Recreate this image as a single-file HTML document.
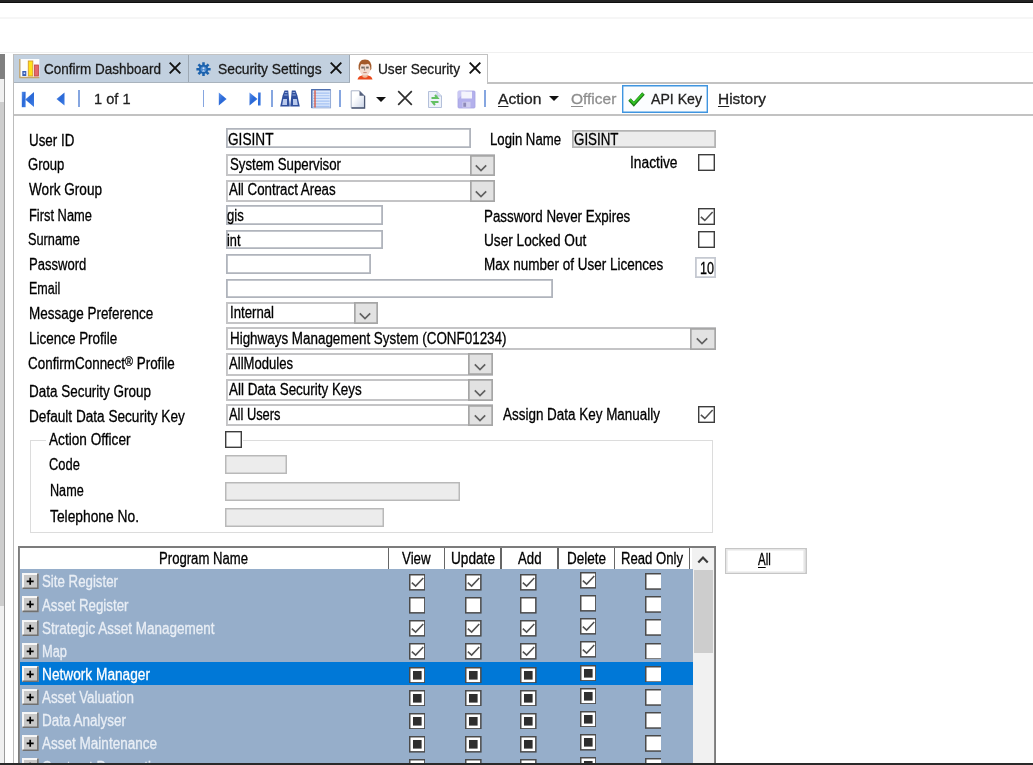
<!DOCTYPE html>
<html><head><meta charset="utf-8"><title>User Security</title>
<style>
html,body{margin:0;padding:0;background:#fff;}
body{width:1033px;height:765px;overflow:hidden;position:relative;font-family:"Liberation Sans",sans-serif;}
#wrap{position:absolute;left:-16px;top:-16px;width:1065px;height:797px;background:#fff;filter:blur(0.45px);}
#app{position:absolute;left:16px;top:16px;width:1033px;height:765px;}
.t{position:absolute;white-space:nowrap;line-height:1;transform-origin:0 0;-webkit-text-stroke:0.3px currentColor;}
.r{position:absolute;box-sizing:border-box;display:block;}
u{text-decoration-thickness:1.1px;text-underline-offset:1.6px;}
</style></head><body>
<div id="wrap"><div id="app">
<div class="r" style="left:-12.00px;top:-12.00px;width:1057.00px;height:15.00px;background:#0e0e0e;"></div>
<div class="r" style="left:-12.00px;top:-12.00px;width:1057.00px;height:13.70px;background:#232323;"></div>
<div class="r" style="left:-12.00px;top:16.80px;width:1057.00px;height:2.00px;background:#f6f6f6;"></div>
<div class="r" style="left:-12.00px;top:51.50px;width:1057.00px;height:1.00px;background:#f0f0f0;"></div>
<div class="r" style="left:-12.00px;top:53.50px;width:17.00px;height:25.80px;background:#808080;"></div>
<div class="r" style="left:-12.00px;top:79.30px;width:17.00px;height:697.70px;background:#f0f0f0;"></div>
<div class="r" style="left:-12.00px;top:101.80px;width:17.00px;height:504.20px;background:#cdcdcd;"></div>
<div class="r" style="left:4.00px;top:79.00px;width:1.40px;height:698.00px;background:#9c9c9c;"></div>
<div class="r" style="left:13.20px;top:54.00px;width:1.30px;height:723.00px;background:#bcbcbc;"></div>
<div class="r" style="left:14.00px;top:54.50px;width:335.50px;height:28.40px;background:#c2d0df;"></div>
<div class="r" style="left:13.50px;top:53.80px;width:474.50px;height:1.40px;background:#c2c2c2;"></div>
<div class="r" style="left:188.00px;top:55.00px;width:1.00px;height:28.00px;background:#9da8b4;"></div>
<div class="r" style="left:349.50px;top:55.00px;width:137.50px;height:28.50px;background:#fff;"></div>
<div class="r" style="left:348.70px;top:55.00px;width:1.10px;height:28.00px;background:#9da8b4;"></div>
<div class="r" style="left:487.00px;top:54.50px;width:1.00px;height:28.50px;background:#c0c0c0;"></div>
<div class="r" style="left:14.00px;top:82.10px;width:335.50px;height:1.00px;background:#a9b3bd;"></div>
<div class="r" style="left:487.00px;top:82.30px;width:558.00px;height:1.40px;background:#c2c2c2;"></div>
<div class="r" style="left:14.00px;top:114.30px;width:1031.00px;height:1.30px;background:#c2c2c2;"></div>
<span class="t" style="left:43.50px;top:60.58px;font-size:15.5px;color:#1a1a1a;transform:scaleX(0.8705);">Confirm Dashboard</span>
<span class="t" style="left:218.00px;top:60.58px;font-size:15.5px;color:#1a1a1a;transform:scaleX(0.8916);">Security Settings</span>
<span class="t" style="left:378.00px;top:60.58px;font-size:15.5px;color:#1a1a1a;transform:scaleX(0.8814);">User Security</span>
<svg class="r" style="left:166.50px;top:60.30px" width="16" height="16" viewBox="-8 -8 16 16"><path d="M-5.3 -5.3 L5.3 5.3 M5.3 -5.3 L-5.3 5.3" stroke="#111" stroke-width="1.9" fill="none"/></svg>
<svg class="r" style="left:328.10px;top:60.30px" width="16" height="16" viewBox="-8 -8 16 16"><path d="M-5.3 -5.3 L5.3 5.3 M5.3 -5.3 L-5.3 5.3" stroke="#111" stroke-width="1.9" fill="none"/></svg>
<svg class="r" style="left:467.10px;top:60.30px" width="16" height="16" viewBox="-8 -8 16 16"><path d="M-5.3 -5.3 L5.3 5.3 M5.3 -5.3 L-5.3 5.3" stroke="#111" stroke-width="1.9" fill="none"/></svg>
<svg class="r" style="left:18.400px;top:58.300px" width="22.600" height="22" viewBox="0 0 22 22"><rect x="2" y="1" width="19" height="18" fill="#fdfdfd"/><path d="M1.5 1 V19.5 H21" stroke="#c4a56a" stroke-width="1.3" fill="none"/><rect x="4" y="13" width="4" height="5" fill="#3a5fb5"/><rect x="5.3" y="14.5" width="1.6" height="1.6" fill="#cfe0ff"/><rect x="10" y="3" width="4.5" height="15" fill="#ffe21a" stroke="#d49a2a" stroke-width="0.9"/><rect x="16.2" y="7" width="4" height="11" fill="#e5686b" stroke="#bf4444" stroke-width="0.8"/></svg>
<svg class="r" style="left:196.300px;top:61.800px" width="15" height="14.500" viewBox="-8 -8 16 16" preserveAspectRatio="none"><g stroke="#1c62ad" stroke-width="2.700"><path d="M0 -7.600V7.600M-7.600 0H7.600M-5.400 -5.400L5.400 5.400M5.400 -5.400L-5.400 5.400"/></g><circle r="5" fill="#1c62ad"/><circle r="3.100" fill="#4f8bd0"/><circle cy="-1" r="1.100" fill="#cfe0f5"/><path d="M-1.600 2.600 Q0 -0.400 1.600 2.600Z" fill="#cfe0f5"/></svg>
<svg class="r" style="left:357px;top:58.500px" width="16" height="21" viewBox="0 0 16 21"><path d="M0.500 20.500 Q1 16.200 8 16.200 Q15 16.200 15.500 20.500 Z" fill="#ea4a1c"/><path d="M5.500 15 H10.500 V18 Q8 19.500 5.500 18Z" fill="#f0b89a"/><ellipse cx="8" cy="9.500" rx="5.600" ry="7" fill="#f3ddd0"/><path d="M1.600 10 Q0.800 0.500 8 0.500 Q15.200 0.500 14.400 10 L13.300 11.500 Q13.500 5.500 11 4.800 Q8 6 4.500 5 Q2.800 6 2.800 11.500Z" fill="#a35a2a"/><rect x="4.300" y="7.600" width="2.600" height="1.900" fill="#6f665f"/><rect x="9.100" y="7.600" width="2.600" height="1.900" fill="#6f665f"/><path d="M7.600 7.500 V11.500" stroke="#8a7a70" stroke-width="0.900"/><path d="M6.300 13.600 H9.700" stroke="#c98672" stroke-width="1"/></svg>
<svg class="r" width="0" height="0" style="left:0;top:0"><defs><linearGradient id="bl" x1="0" y1="0" x2="1" y2="1"><stop offset="0" stop-color="#5b92ec"/><stop offset="0.5" stop-color="#2a68d6"/><stop offset="1" stop-color="#3f7fe6"/></linearGradient></defs></svg>
<svg class="r" style="left:21px;top:90.500px" width="14" height="17" viewBox="0 0 14 17"><rect x="0.800" y="0.800" width="3.800" height="15.400" fill="url(#bl)"/><path d="M13 1 L4.200 8.500 L13 16Z" fill="url(#bl)"/></svg>
<svg class="r" style="left:55px;top:91px" width="12" height="16" viewBox="0 0 12 16"><path d="M9.500 1.500 L1.500 8 L9.500 14.500Z" fill="url(#bl)"/></svg>
<div class="r" style="left:78.45px;top:90.30px;width:1.10px;height:16.50px;background:#86a6e0;"></div>
<span class="t" style="left:93.50px;top:91.08px;font-size:15.5px;color:#222;transform:scaleX(0.9412);">1 of 1</span>
<div class="r" style="left:202.95px;top:90.30px;width:1.10px;height:16.50px;background:#86a6e0;"></div>
<svg class="r" style="left:217px;top:91px" width="12" height="16" viewBox="0 0 12 16"><path d="M1.800 1.500 L9.600 8 L1.800 14.500Z" fill="url(#bl)"/></svg>
<svg class="r" style="left:248px;top:91px" width="14" height="16" viewBox="0 0 14 16"><path d="M1.500 1.500 L9.500 8 L1.500 14.500Z" fill="url(#bl)"/><rect x="10" y="1.500" width="2.600" height="13" fill="url(#bl)"/></svg>
<div class="r" style="left:271.45px;top:90.30px;width:1.10px;height:16.50px;background:#86a6e0;"></div>
<svg class="r" style="left:279px;top:89px" width="22" height="20" viewBox="0 0 22 20"><g fill="#2f4f9e"><path d="M5.500 1.500 H9.200 L10.800 17.500 H1.200 L3.600 6.500Z"/><path d="M12.800 1.500 H16.500 L18.400 6.500 L20.800 17.500 H11.200Z"/></g><path d="M4.200 10 H8 V16 H3.200Z M14 10 H17.800 L18.800 16 H14Z" fill="#b9c9ec"/><path d="M5.800 3.500 H8.400 M13.600 3.500 H16.200 M5.200 6 H8.600 M13.400 6 H16.800" stroke="#9fb4e2" stroke-width="0.900"/></svg>
<svg class="r" style="left:311.300px;top:89px" width="20.500" height="19.800" viewBox="0 0 22 22" preserveAspectRatio="none"><rect x="1" y="1" width="20" height="20" fill="#dbe8fc" stroke="#8ea6d4" stroke-width="1"/><path d="M0.800 21 V0.800 H21" fill="none" stroke="#4f6fae" stroke-width="1.400"/><path d="M2 4.500H20M2 7.500H20M2 10.500H20M2 13.500H20M2 16.500H20M2 19.300H20" stroke="#a6c2f2" stroke-width="1.300"/><path d="M4.300 1.500V20.500" stroke="#e0482a" stroke-width="1.300"/></svg>
<div class="r" style="left:339.45px;top:90.30px;width:1.10px;height:16.50px;background:#86a6e0;"></div>
<svg class="r" style="left:350px;top:89.500px" width="16" height="19" viewBox="0 0 16 19"><defs><linearGradient id="pg" x1="0" y1="0" x2="1" y2="1"><stop offset="0.350" stop-color="#ffffff"/><stop offset="1" stop-color="#c9d3e6"/></linearGradient></defs><path d="M1.200 0.800 H9.500 L14.500 5.800 V17.800 H1.200Z" fill="url(#pg)" stroke="#a3adc2" stroke-width="0.900"/><path d="M9.500 0.800 L14.500 5.800 H9.500Z" fill="#56627e"/><path d="M14.600 5.800 V18 H1.500" stroke="#4a5673" stroke-width="1.300" fill="none"/></svg>
<svg class="r" style="left:375px;top:95.500px" width="12" height="7" viewBox="0 0 12 7"><path d="M1 1 H11 L6 6Z" fill="#111"/></svg>
<svg class="r" style="left:396.80px;top:90.00px" width="16" height="16" viewBox="-8 -8 16 16"><path d="M-6.8 -6.8 L6.8 6.8 M6.8 -6.8 L-6.8 6.8" stroke="#2e2e2e" stroke-width="1.65" fill="none"/></svg>
<svg class="r" style="left:427px;top:90px" width="16" height="19" viewBox="0 0 16 19"><path d="M1.500 1.500 H10 L14.500 6 V17.500 H1.500Z" fill="#eef2fa" stroke="#b4c0da" stroke-width="1"/><path d="M10 1.500 V6 H14.500" fill="#dbe3f2" stroke="#b4c0da" stroke-width="0.800"/><path d="M4.500 8 h6 l-2.500 -3 M11.500 12 h-6 l2.500 3" stroke="#63c062" stroke-width="2" fill="none"/></svg>
<svg class="r" style="left:457px;top:90px" width="19" height="19" viewBox="0 0 19 19"><rect x="1" y="1" width="17" height="17" rx="1" fill="#b3b0ec" stroke="#a6a3e2" stroke-width="0.800"/><path d="M1 1 H9 L1 9Z" fill="#c9c7f3"/><rect x="4.300" y="1.500" width="10.700" height="7" fill="#f4f4fc"/><rect x="5.500" y="11.800" width="8" height="5.700" fill="#cfcdf0"/><rect x="6.300" y="12.600" width="2.800" height="4.200" fill="#8e8ab8"/></svg>
<div class="r" style="left:484.45px;top:90.30px;width:1.10px;height:16.50px;background:#86a6e0;"></div>
<span class="t" style="left:497.50px;top:91.08px;font-size:15.5px;color:#222;transform:scaleX(1.0094);"><u>A</u>ction</span>
<svg class="r" style="left:547.5px;top:95px" width="12" height="7" viewBox="0 0 12 7"><path d="M1 1 H11 L6 6Z" fill="#111"/></svg>
<span class="t" style="left:570.70px;top:91.08px;font-size:15.5px;color:#8e8e8e;transform:scaleX(0.9983);"><u>O</u>fficer</span>
<div class="r" style="left:622.00px;top:84.90px;width:86.30px;height:28.10px;background:#fbfdff;box-shadow:inset 0 0 0 1.400px #3f95e0;"></div>
<svg class="r" style="left:627px;top:90px" width="19" height="18" viewBox="0 0 19 18"><path d="M2.500 9.500 L6.800 14.200 L16.500 3.500" fill="none" stroke="#1e7a17" stroke-width="3.400"/><path d="M2.800 9.300 L6.800 13.400 L16 3.600" fill="none" stroke="#32c424" stroke-width="1.800"/></svg>
<span class="t" style="left:650.70px;top:91.08px;font-size:15.5px;color:#222;transform:scaleX(0.9107);">API Key</span>
<span class="t" style="left:717.50px;top:91.08px;font-size:15.5px;color:#222;transform:scaleX(0.9948);"><u>H</u>istory</span>
<div class="r" style="left:30.00px;top:440.20px;width:682.80px;height:92.60px;background:transparent;box-shadow:inset 0 0 0 1px #dcdcdc;"></div>
<div class="r" style="left:46.00px;top:436.00px;width:197.00px;height:10.00px;background:#fff;"></div>
<span class="t" style="left:28.70px;top:132.69px;font-size:15.6px;color:#000;transform:scaleX(0.8570);">User ID</span>
<span class="t" style="left:28.20px;top:156.79px;font-size:15.6px;color:#000;transform:scaleX(0.8375);">Group</span>
<span class="t" style="left:28.70px;top:181.79px;font-size:15.6px;color:#000;transform:scaleX(0.8713);">Work Group</span>
<span class="t" style="left:28.70px;top:207.79px;font-size:15.6px;color:#000;transform:scaleX(0.8262);">First Name</span>
<span class="t" style="left:28.20px;top:232.29px;font-size:15.6px;color:#000;transform:scaleX(0.8186);">Surname</span>
<span class="t" style="left:28.70px;top:256.79px;font-size:15.6px;color:#000;transform:scaleX(0.8369);">Password</span>
<span class="t" style="left:28.70px;top:281.29px;font-size:15.6px;color:#000;transform:scaleX(0.8026);">Email</span>
<span class="t" style="left:28.70px;top:305.59px;font-size:15.6px;color:#000;transform:scaleX(0.8639);">Message Preference</span>
<span class="t" style="left:28.70px;top:331.29px;font-size:15.6px;color:#000;transform:scaleX(0.8633);">Licence Profile</span>
<span class="t" style="left:28.20px;top:355.79px;font-size:15.6px;color:#000;transform:scaleX(0.8613);">ConfirmConnect<span style="font-size:12.500px;position:relative;top:-2.500px">®</span> Profile</span>
<span class="t" style="left:28.70px;top:384.29px;font-size:15.6px;color:#000;transform:scaleX(0.8635);">Data Security Group</span>
<span class="t" style="left:28.70px;top:408.59px;font-size:15.6px;color:#000;transform:scaleX(0.8726);">Default Data Security Key</span>
<span class="t" style="left:49.20px;top:431.79px;font-size:15.6px;color:#000;transform:scaleX(0.8734);">Action Officer</span>
<span class="t" style="left:49.20px;top:457.29px;font-size:15.6px;color:#000;transform:scaleX(0.8262);">Code</span>
<span class="t" style="left:50.00px;top:482.79px;font-size:15.6px;color:#000;transform:scaleX(0.8099);">Name</span>
<span class="t" style="left:50.00px;top:508.79px;font-size:15.6px;color:#000;transform:scaleX(0.8849);">Telephone No.</span>
<div class="r" style="left:225.70px;top:128.30px;width:245.60px;height:20.20px;background:#fff;box-shadow:inset 0 0 0 1.8px #b0b4bc;"></div>
<span class="t" style="left:227.50px;top:131.89px;font-size:15.6px;color:#000;transform:scaleX(0.8753);">GISINT</span>
<span class="t" style="left:490.00px;top:131.99px;font-size:15.6px;color:#000;transform:scaleX(0.8443);">Login Name</span>
<div class="r" style="left:571.70px;top:129.80px;width:144.60px;height:18.00px;background:#ececec;box-shadow:inset 0 0 0 1.8px #b4b4b4;"></div>
<span class="t" style="left:573.50px;top:131.89px;font-size:15.6px;color:#000;transform:scaleX(0.8560);">GISINT</span>
<div class="r" style="left:225.70px;top:154.30px;width:269.10px;height:22.20px;background:#fff;box-shadow:inset 0 0 0 1.9px #c4c4c6;"></div>
<div class="r" style="left:469.50px;top:154.50px;width:25.30px;height:21.90px;background:#e2e2e2;box-shadow:inset 0 0 0 1.700px #a6a6a6;"></div>
<svg class="r" style="left:474.90px;top:164.10px" width="12" height="8" viewBox="0 0 12 8"><path d="M0.800 1.300 L6 6.500 L11.200 1.300" fill="none" stroke="#606060" stroke-width="1.700"/></svg>
<span class="t" style="left:229.50px;top:157.29px;font-size:15.6px;color:#000;transform:scaleX(0.8482);">System Supervisor</span>
<span class="t" style="left:630.00px;top:154.99px;font-size:15.6px;color:#000;transform:scaleX(0.8837);">Inactive</span>
<svg class="r" style="left:697.50px;top:154.20px" width="17" height="17" viewBox="0 0 17 17"><rect x="0.7" y="0.7" width="15.6" height="15.6" fill="#fff" stroke="#3d3d3d" stroke-width="1.4"/></svg>
<div class="r" style="left:225.70px;top:180.00px;width:269.10px;height:22.20px;background:#fff;box-shadow:inset 0 0 0 1.9px #c4c4c6;"></div>
<div class="r" style="left:469.50px;top:180.20px;width:25.30px;height:21.90px;background:#e2e2e2;box-shadow:inset 0 0 0 1.700px #a6a6a6;"></div>
<svg class="r" style="left:474.90px;top:189.80px" width="12" height="8" viewBox="0 0 12 8"><path d="M0.800 1.300 L6 6.500 L11.200 1.300" fill="none" stroke="#606060" stroke-width="1.700"/></svg>
<span class="t" style="left:229.00px;top:182.29px;font-size:15.6px;color:#000;transform:scaleX(0.8549);">All Contract Areas</span>
<div class="r" style="left:225.70px;top:205.30px;width:157.40px;height:19.70px;background:#fff;box-shadow:inset 0 0 0 1.8px #b0b4bc;"></div>
<span class="t" style="left:227.00px;top:208.29px;font-size:15.6px;color:#000;transform:scaleX(0.8376);">gis</span>
<span class="t" style="left:483.70px;top:209.39px;font-size:15.6px;color:#000;transform:scaleX(0.8569);">Password Never Expires</span>
<svg class="r" style="left:697.50px;top:208.00px" width="17" height="17" viewBox="0 0 17 17"><rect x="0.7" y="0.7" width="15.6" height="15.6" fill="#fff" stroke="#3d3d3d" stroke-width="1.4"/><path d="M2.89 8.84 L6.80 12.41 L14.62 4.08" fill="none" stroke="#505050" stroke-width="1.550"/></svg>
<div class="r" style="left:225.70px;top:229.80px;width:157.40px;height:19.50px;background:#fff;box-shadow:inset 0 0 0 1.8px #b0b4bc;"></div>
<span class="t" style="left:227.00px;top:232.79px;font-size:15.6px;color:#000;transform:scaleX(0.8190);">int</span>
<span class="t" style="left:483.70px;top:232.59px;font-size:15.6px;color:#000;transform:scaleX(0.8742);">User Locked Out</span>
<svg class="r" style="left:697.50px;top:231.00px" width="17" height="17" viewBox="0 0 17 17"><rect x="0.7" y="0.7" width="15.6" height="15.6" fill="#fff" stroke="#3d3d3d" stroke-width="1.4"/></svg>
<div class="r" style="left:225.70px;top:254.30px;width:144.90px;height:19.50px;background:#fff;box-shadow:inset 0 0 0 1.8px #b0b4bc;"></div>
<span class="t" style="left:483.70px;top:257.39px;font-size:15.6px;color:#000;transform:scaleX(0.8656);">Max number of User Licences</span>
<div class="r" style="left:694.70px;top:257.30px;width:21.20px;height:20.50px;background:#fff;box-shadow:inset 0 0 0 1.8px #c5c9d1;"></div>
<span class="t" style="left:700.00px;top:260.79px;font-size:15.6px;color:#000;transform:scaleX(0.8065);">10</span>
<div class="r" style="left:225.70px;top:278.80px;width:327.40px;height:19.50px;background:#fff;box-shadow:inset 0 0 0 1.8px #b0b4bc;"></div>
<div class="r" style="left:225.70px;top:301.80px;width:152.40px;height:22.50px;background:#fff;box-shadow:inset 0 0 0 1.9px #c4c4c6;"></div>
<div class="r" style="left:354.30px;top:302.00px;width:23.80px;height:22.20px;background:#e2e2e2;box-shadow:inset 0 0 0 1.700px #a6a6a6;"></div>
<svg class="r" style="left:358.95px;top:311.75px" width="12" height="8" viewBox="0 0 12 8"><path d="M0.800 1.300 L6 6.500 L11.200 1.300" fill="none" stroke="#606060" stroke-width="1.700"/></svg>
<span class="t" style="left:230.00px;top:304.89px;font-size:15.6px;color:#000;transform:scaleX(0.8459);">Internal</span>
<div class="r" style="left:225.70px;top:327.30px;width:490.00px;height:22.50px;background:#fff;box-shadow:inset 0 0 0 1.9px #c4c4c6;"></div>
<div class="r" style="left:689.90px;top:327.50px;width:25.80px;height:22.20px;background:#e2e2e2;box-shadow:inset 0 0 0 1.700px #a6a6a6;"></div>
<svg class="r" style="left:695.55px;top:337.25px" width="12" height="8" viewBox="0 0 12 8"><path d="M0.800 1.300 L6 6.500 L11.200 1.300" fill="none" stroke="#606060" stroke-width="1.700"/></svg>
<span class="t" style="left:229.50px;top:331.09px;font-size:15.6px;color:#000;transform:scaleX(0.8599);">Highways Management System (CONF01234)</span>
<div class="r" style="left:225.70px;top:353.00px;width:267.80px;height:22.50px;background:#fff;box-shadow:inset 0 0 0 1.9px #c4c4c6;"></div>
<div class="r" style="left:468.20px;top:353.20px;width:25.30px;height:22.20px;background:#e2e2e2;box-shadow:inset 0 0 0 1.700px #a6a6a6;"></div>
<svg class="r" style="left:473.60px;top:362.95px" width="12" height="8" viewBox="0 0 12 8"><path d="M0.800 1.300 L6 6.500 L11.200 1.300" fill="none" stroke="#606060" stroke-width="1.700"/></svg>
<span class="t" style="left:229.00px;top:356.29px;font-size:15.6px;color:#000;transform:scaleX(0.8390);">AllModules</span>
<div class="r" style="left:225.70px;top:378.80px;width:267.80px;height:22.30px;background:#fff;box-shadow:inset 0 0 0 1.9px #c4c4c6;"></div>
<div class="r" style="left:468.20px;top:379.00px;width:25.30px;height:22.00px;background:#e2e2e2;box-shadow:inset 0 0 0 1.700px #a6a6a6;"></div>
<svg class="r" style="left:473.60px;top:388.65px" width="12" height="8" viewBox="0 0 12 8"><path d="M0.800 1.300 L6 6.500 L11.200 1.300" fill="none" stroke="#606060" stroke-width="1.700"/></svg>
<span class="t" style="left:229.00px;top:381.89px;font-size:15.6px;color:#000;transform:scaleX(0.8602);">All Data Security Keys</span>
<div class="r" style="left:225.70px;top:404.30px;width:267.80px;height:22.20px;background:#fff;box-shadow:inset 0 0 0 1.9px #c4c4c6;"></div>
<div class="r" style="left:468.20px;top:404.50px;width:25.30px;height:21.90px;background:#e2e2e2;box-shadow:inset 0 0 0 1.700px #a6a6a6;"></div>
<svg class="r" style="left:473.60px;top:414.10px" width="12" height="8" viewBox="0 0 12 8"><path d="M0.800 1.300 L6 6.500 L11.200 1.300" fill="none" stroke="#606060" stroke-width="1.700"/></svg>
<span class="t" style="left:229.00px;top:407.29px;font-size:15.6px;color:#000;transform:scaleX(0.8254);">All Users</span>
<span class="t" style="left:502.50px;top:406.79px;font-size:15.6px;color:#000;transform:scaleX(0.8625);">Assign Data Key Manually</span>
<svg class="r" style="left:697.50px;top:406.00px" width="17" height="17" viewBox="0 0 17 17"><rect x="0.7" y="0.7" width="15.6" height="15.6" fill="#fff" stroke="#3d3d3d" stroke-width="1.4"/><path d="M2.89 8.84 L6.80 12.41 L14.62 4.08" fill="none" stroke="#505050" stroke-width="1.550"/></svg>
<svg class="r" style="left:225.30px;top:430.80px" width="17" height="17" viewBox="0 0 17 17"><rect x="0.7" y="0.7" width="15.6" height="15.6" fill="#fff" stroke="#3d3d3d" stroke-width="1.4"/></svg>
<div class="r" style="left:224.70px;top:454.90px;width:62.60px;height:19.60px;background:#ececec;box-shadow:inset 0 0 0 1.5px #b9b9b9;"></div>
<div class="r" style="left:224.70px;top:481.90px;width:235.60px;height:19.60px;background:#ececec;box-shadow:inset 0 0 0 1.5px #b9b9b9;"></div>
<div class="r" style="left:224.70px;top:507.90px;width:158.90px;height:19.60px;background:#ececec;box-shadow:inset 0 0 0 1.5px #b9b9b9;"></div>
<div class="r" style="left:18.00px;top:546.30px;width:698.00px;height:230.70px;background:#fff;box-shadow:inset 0 0 0 1.900px #7c7c7c;"></div>
<div class="r" style="left:20.10px;top:548.00px;width:672.40px;height:20.90px;background:#fff;"></div>
<div class="r" style="left:387.80px;top:547.50px;width:1.60px;height:21.20px;background:#666;"></div>
<div class="r" style="left:443.80px;top:547.50px;width:1.60px;height:21.20px;background:#666;"></div>
<div class="r" style="left:500.40px;top:547.50px;width:1.60px;height:21.20px;background:#666;"></div>
<div class="r" style="left:557.00px;top:547.50px;width:1.60px;height:21.20px;background:#666;"></div>
<div class="r" style="left:613.50px;top:547.50px;width:1.60px;height:21.20px;background:#666;"></div>
<div class="r" style="left:688.50px;top:547.50px;width:1.60px;height:21.20px;background:#666;"></div>
<span class="t" style="left:159.00px;top:550.99px;font-size:15.6px;color:#000;transform:scaleX(0.8417);">Program Name</span>
<span class="t" style="left:402.40px;top:550.99px;font-size:15.6px;color:#000;transform:scaleX(0.8529);">View</span>
<span class="t" style="left:451.00px;top:550.99px;font-size:15.6px;color:#000;transform:scaleX(0.8748);">Update</span>
<span class="t" style="left:518.00px;top:550.99px;font-size:15.6px;color:#000;transform:scaleX(0.8468);">Add</span>
<span class="t" style="left:566.50px;top:550.99px;font-size:15.6px;color:#000;transform:scaleX(0.8674);">Delete</span>
<span class="t" style="left:621.00px;top:550.99px;font-size:15.6px;color:#000;transform:scaleX(0.8414);">Read Only</span>
<div class="r" style="left:692.30px;top:548.00px;width:22.00px;height:229.00px;background:#f1f1f1;"></div>
<div class="r" style="left:694.20px;top:569.50px;width:18.60px;height:83.00px;background:#cdcdcd;"></div>
<svg class="r" style="left:697px;top:553.500px" width="12" height="11" viewBox="0 0 12 11"><path d="M1.300 8.500 L6 3.500 L10.700 8.500" fill="none" stroke="#3c3c3c" stroke-width="2.200"/></svg>
<div class="r" style="left:20.00px;top:568.90px;width:672.50px;height:208.10px;background:#96aeca;"></div>
<svg class="r" style="left:22px;top:573.30px" width="16.700" height="16.200" viewBox="0 0 16.700 16.200"><rect x="0" y="0" width="16.700" height="16.200" fill="#c8c8c8"/><path d="M1 15.200V1H15.700" stroke="#f6f6f6" stroke-width="2" fill="none"/><path d="M15.900 0.500V15.400H0.500" stroke="#707070" stroke-width="1.600" fill="none"/><path d="M4.700 8.300H11.700M8.200 4.800V11.800" stroke="#000" stroke-width="1.700"/></svg>
<span class="t" style="left:42.00px;top:574.39px;font-size:15.6px;color:#e9eef5;transform:scaleX(0.8512);">Site Register</span>
<svg class="r" style="left:408.50px;top:574.00px" width="16.6" height="16.6" viewBox="0 0 16.6 16.6"><rect x="0.75" y="0.75" width="15.100000000000001" height="15.100000000000001" fill="#fff" stroke="#4a4a4a" stroke-width="1.5"/><path d="M2.82 8.63 L6.64 12.12 L14.28 3.98" fill="none" stroke="#505050" stroke-width="1.550"/></svg>
<svg class="r" style="left:465.00px;top:574.00px" width="16.6" height="16.6" viewBox="0 0 16.6 16.6"><rect x="0.75" y="0.75" width="15.100000000000001" height="15.100000000000001" fill="#fff" stroke="#4a4a4a" stroke-width="1.5"/><path d="M2.82 8.63 L6.64 12.12 L14.28 3.98" fill="none" stroke="#505050" stroke-width="1.550"/></svg>
<svg class="r" style="left:520.00px;top:574.00px" width="16.6" height="16.6" viewBox="0 0 16.6 16.6"><rect x="0.75" y="0.75" width="15.100000000000001" height="15.100000000000001" fill="#fff" stroke="#4a4a4a" stroke-width="1.5"/><path d="M2.82 8.63 L6.64 12.12 L14.28 3.98" fill="none" stroke="#505050" stroke-width="1.550"/></svg>
<svg class="r" style="left:579.70px;top:572.00px" width="16.6" height="16.6" viewBox="0 0 16.6 16.6"><rect x="0.75" y="0.75" width="15.100000000000001" height="15.100000000000001" fill="#fff" stroke="#4a4a4a" stroke-width="1.5"/><path d="M2.82 8.63 L6.64 12.12 L14.28 3.98" fill="none" stroke="#505050" stroke-width="1.550"/></svg>
<svg class="r" style="left:645.00px;top:573.10px" width="15.50" height="16.8" viewBox="0 0 15.50 16.8"><rect x="0.75" y="0.75" width="20.8" height="15.3" fill="#fff" stroke="#4a4a4a" stroke-width="1.5"/></svg>
<svg class="r" style="left:22px;top:596.44px" width="16.700" height="16.200" viewBox="0 0 16.700 16.200"><rect x="0" y="0" width="16.700" height="16.200" fill="#c8c8c8"/><path d="M1 15.200V1H15.700" stroke="#f6f6f6" stroke-width="2" fill="none"/><path d="M15.900 0.500V15.400H0.500" stroke="#707070" stroke-width="1.600" fill="none"/><path d="M4.700 8.300H11.700M8.200 4.800V11.800" stroke="#000" stroke-width="1.700"/></svg>
<span class="t" style="left:42.00px;top:597.53px;font-size:15.6px;color:#e9eef5;transform:scaleX(0.8530);">Asset Register</span>
<svg class="r" style="left:408.50px;top:597.14px" width="16.6" height="16.6" viewBox="0 0 16.6 16.6"><rect x="0.75" y="0.75" width="15.100000000000001" height="15.100000000000001" fill="#fff" stroke="#4a4a4a" stroke-width="1.5"/></svg>
<svg class="r" style="left:465.00px;top:597.14px" width="16.6" height="16.6" viewBox="0 0 16.6 16.6"><rect x="0.75" y="0.75" width="15.100000000000001" height="15.100000000000001" fill="#fff" stroke="#4a4a4a" stroke-width="1.5"/></svg>
<svg class="r" style="left:520.00px;top:597.14px" width="16.6" height="16.6" viewBox="0 0 16.6 16.6"><rect x="0.75" y="0.75" width="15.100000000000001" height="15.100000000000001" fill="#fff" stroke="#4a4a4a" stroke-width="1.5"/></svg>
<svg class="r" style="left:579.70px;top:595.14px" width="16.6" height="16.6" viewBox="0 0 16.6 16.6"><rect x="0.75" y="0.75" width="15.100000000000001" height="15.100000000000001" fill="#fff" stroke="#4a4a4a" stroke-width="1.5"/></svg>
<svg class="r" style="left:645.00px;top:596.24px" width="15.50" height="16.8" viewBox="0 0 15.50 16.8"><rect x="0.75" y="0.75" width="20.8" height="15.3" fill="#fff" stroke="#4a4a4a" stroke-width="1.5"/></svg>
<svg class="r" style="left:22px;top:619.58px" width="16.700" height="16.200" viewBox="0 0 16.700 16.200"><rect x="0" y="0" width="16.700" height="16.200" fill="#c8c8c8"/><path d="M1 15.200V1H15.700" stroke="#f6f6f6" stroke-width="2" fill="none"/><path d="M15.900 0.500V15.400H0.500" stroke="#707070" stroke-width="1.600" fill="none"/><path d="M4.700 8.300H11.700M8.200 4.800V11.800" stroke="#000" stroke-width="1.700"/></svg>
<span class="t" style="left:42.00px;top:620.67px;font-size:15.6px;color:#e9eef5;transform:scaleX(0.8652);">Strategic Asset Management</span>
<svg class="r" style="left:408.50px;top:620.28px" width="16.6" height="16.6" viewBox="0 0 16.6 16.6"><rect x="0.75" y="0.75" width="15.100000000000001" height="15.100000000000001" fill="#fff" stroke="#4a4a4a" stroke-width="1.5"/><path d="M2.82 8.63 L6.64 12.12 L14.28 3.98" fill="none" stroke="#505050" stroke-width="1.550"/></svg>
<svg class="r" style="left:465.00px;top:620.28px" width="16.6" height="16.6" viewBox="0 0 16.6 16.6"><rect x="0.75" y="0.75" width="15.100000000000001" height="15.100000000000001" fill="#fff" stroke="#4a4a4a" stroke-width="1.5"/><path d="M2.82 8.63 L6.64 12.12 L14.28 3.98" fill="none" stroke="#505050" stroke-width="1.550"/></svg>
<svg class="r" style="left:520.00px;top:620.28px" width="16.6" height="16.6" viewBox="0 0 16.6 16.6"><rect x="0.75" y="0.75" width="15.100000000000001" height="15.100000000000001" fill="#fff" stroke="#4a4a4a" stroke-width="1.5"/><path d="M2.82 8.63 L6.64 12.12 L14.28 3.98" fill="none" stroke="#505050" stroke-width="1.550"/></svg>
<svg class="r" style="left:579.70px;top:618.28px" width="16.6" height="16.6" viewBox="0 0 16.6 16.6"><rect x="0.75" y="0.75" width="15.100000000000001" height="15.100000000000001" fill="#fff" stroke="#4a4a4a" stroke-width="1.5"/><path d="M2.82 8.63 L6.64 12.12 L14.28 3.98" fill="none" stroke="#505050" stroke-width="1.550"/></svg>
<svg class="r" style="left:645.00px;top:619.38px" width="15.50" height="16.8" viewBox="0 0 15.50 16.8"><rect x="0.75" y="0.75" width="20.8" height="15.3" fill="#fff" stroke="#4a4a4a" stroke-width="1.5"/></svg>
<svg class="r" style="left:22px;top:642.72px" width="16.700" height="16.200" viewBox="0 0 16.700 16.200"><rect x="0" y="0" width="16.700" height="16.200" fill="#c8c8c8"/><path d="M1 15.200V1H15.700" stroke="#f6f6f6" stroke-width="2" fill="none"/><path d="M15.900 0.500V15.400H0.500" stroke="#707070" stroke-width="1.600" fill="none"/><path d="M4.700 8.300H11.700M8.200 4.800V11.800" stroke="#000" stroke-width="1.700"/></svg>
<span class="t" style="left:42.00px;top:643.81px;font-size:15.6px;color:#e9eef5;transform:scaleX(0.8239);">Map</span>
<svg class="r" style="left:408.50px;top:643.42px" width="16.6" height="16.6" viewBox="0 0 16.6 16.6"><rect x="0.75" y="0.75" width="15.100000000000001" height="15.100000000000001" fill="#fff" stroke="#4a4a4a" stroke-width="1.5"/><path d="M2.82 8.63 L6.64 12.12 L14.28 3.98" fill="none" stroke="#505050" stroke-width="1.550"/></svg>
<svg class="r" style="left:465.00px;top:643.42px" width="16.6" height="16.6" viewBox="0 0 16.6 16.6"><rect x="0.75" y="0.75" width="15.100000000000001" height="15.100000000000001" fill="#fff" stroke="#4a4a4a" stroke-width="1.5"/><path d="M2.82 8.63 L6.64 12.12 L14.28 3.98" fill="none" stroke="#505050" stroke-width="1.550"/></svg>
<svg class="r" style="left:520.00px;top:643.42px" width="16.6" height="16.6" viewBox="0 0 16.6 16.6"><rect x="0.75" y="0.75" width="15.100000000000001" height="15.100000000000001" fill="#fff" stroke="#4a4a4a" stroke-width="1.5"/><path d="M2.82 8.63 L6.64 12.12 L14.28 3.98" fill="none" stroke="#505050" stroke-width="1.550"/></svg>
<svg class="r" style="left:579.70px;top:641.42px" width="16.6" height="16.6" viewBox="0 0 16.6 16.6"><rect x="0.75" y="0.75" width="15.100000000000001" height="15.100000000000001" fill="#fff" stroke="#4a4a4a" stroke-width="1.5"/><path d="M2.82 8.63 L6.64 12.12 L14.28 3.98" fill="none" stroke="#505050" stroke-width="1.550"/></svg>
<svg class="r" style="left:645.00px;top:642.52px" width="15.50" height="16.8" viewBox="0 0 15.50 16.8"><rect x="0.75" y="0.75" width="20.8" height="15.3" fill="#fff" stroke="#4a4a4a" stroke-width="1.5"/></svg>
<div class="r" style="left:20.00px;top:661.76px;width:672.50px;height:23.14px;background:#0078d7;"></div>
<svg class="r" style="left:22px;top:665.86px" width="16.700" height="16.200" viewBox="0 0 16.700 16.200"><rect x="0" y="0" width="16.700" height="16.200" fill="#c8c8c8"/><path d="M1 15.200V1H15.700" stroke="#f6f6f6" stroke-width="2" fill="none"/><path d="M15.900 0.500V15.400H0.500" stroke="#707070" stroke-width="1.600" fill="none"/><path d="M4.700 8.300H11.700M8.200 4.800V11.800" stroke="#000" stroke-width="1.700"/></svg>
<span class="t" style="left:42.00px;top:666.95px;font-size:15.6px;color:#fff;transform:scaleX(0.8775);">Network Manager</span>
<svg class="r" style="left:408.50px;top:666.56px" width="16.6" height="16.6" viewBox="0 0 16.6 16.6"><rect x="0.75" y="0.75" width="15.100000000000001" height="15.100000000000001" fill="#fff" stroke="#4a4a4a" stroke-width="1.5"/><rect x="3.98" y="3.98" width="8.63" height="8.63" fill="#2e2e2e"/></svg>
<svg class="r" style="left:465.00px;top:666.56px" width="16.6" height="16.6" viewBox="0 0 16.6 16.6"><rect x="0.75" y="0.75" width="15.100000000000001" height="15.100000000000001" fill="#fff" stroke="#4a4a4a" stroke-width="1.5"/><rect x="3.98" y="3.98" width="8.63" height="8.63" fill="#2e2e2e"/></svg>
<svg class="r" style="left:520.00px;top:666.56px" width="16.6" height="16.6" viewBox="0 0 16.6 16.6"><rect x="0.75" y="0.75" width="15.100000000000001" height="15.100000000000001" fill="#fff" stroke="#4a4a4a" stroke-width="1.5"/><rect x="3.98" y="3.98" width="8.63" height="8.63" fill="#2e2e2e"/></svg>
<svg class="r" style="left:579.70px;top:664.56px" width="16.6" height="16.6" viewBox="0 0 16.6 16.6"><rect x="0.75" y="0.75" width="15.100000000000001" height="15.100000000000001" fill="#fff" stroke="#4a4a4a" stroke-width="1.5"/><rect x="3.98" y="3.98" width="8.63" height="8.63" fill="#2e2e2e"/></svg>
<svg class="r" style="left:645.00px;top:665.66px" width="15.50" height="16.8" viewBox="0 0 15.50 16.8"><rect x="0.75" y="0.75" width="20.8" height="15.3" fill="#fff" stroke="#4a4a4a" stroke-width="1.5"/></svg>
<svg class="r" style="left:22px;top:689.00px" width="16.700" height="16.200" viewBox="0 0 16.700 16.200"><rect x="0" y="0" width="16.700" height="16.200" fill="#c8c8c8"/><path d="M1 15.200V1H15.700" stroke="#f6f6f6" stroke-width="2" fill="none"/><path d="M15.900 0.500V15.400H0.500" stroke="#707070" stroke-width="1.600" fill="none"/><path d="M4.700 8.300H11.700M8.200 4.800V11.800" stroke="#000" stroke-width="1.700"/></svg>
<span class="t" style="left:42.00px;top:690.09px;font-size:15.6px;color:#e9eef5;transform:scaleX(0.8582);">Asset Valuation</span>
<svg class="r" style="left:408.50px;top:689.70px" width="16.6" height="16.6" viewBox="0 0 16.6 16.6"><rect x="0.75" y="0.75" width="15.100000000000001" height="15.100000000000001" fill="#fff" stroke="#4a4a4a" stroke-width="1.5"/><rect x="3.98" y="3.98" width="8.63" height="8.63" fill="#2e2e2e"/></svg>
<svg class="r" style="left:465.00px;top:689.70px" width="16.6" height="16.6" viewBox="0 0 16.6 16.6"><rect x="0.75" y="0.75" width="15.100000000000001" height="15.100000000000001" fill="#fff" stroke="#4a4a4a" stroke-width="1.5"/><rect x="3.98" y="3.98" width="8.63" height="8.63" fill="#2e2e2e"/></svg>
<svg class="r" style="left:520.00px;top:689.70px" width="16.6" height="16.6" viewBox="0 0 16.6 16.6"><rect x="0.75" y="0.75" width="15.100000000000001" height="15.100000000000001" fill="#fff" stroke="#4a4a4a" stroke-width="1.5"/><rect x="3.98" y="3.98" width="8.63" height="8.63" fill="#2e2e2e"/></svg>
<svg class="r" style="left:579.70px;top:687.70px" width="16.6" height="16.6" viewBox="0 0 16.6 16.6"><rect x="0.75" y="0.75" width="15.100000000000001" height="15.100000000000001" fill="#fff" stroke="#4a4a4a" stroke-width="1.5"/><rect x="3.98" y="3.98" width="8.63" height="8.63" fill="#2e2e2e"/></svg>
<svg class="r" style="left:645.00px;top:688.80px" width="15.50" height="16.8" viewBox="0 0 15.50 16.8"><rect x="0.75" y="0.75" width="20.8" height="15.3" fill="#fff" stroke="#4a4a4a" stroke-width="1.5"/></svg>
<svg class="r" style="left:22px;top:712.14px" width="16.700" height="16.200" viewBox="0 0 16.700 16.200"><rect x="0" y="0" width="16.700" height="16.200" fill="#c8c8c8"/><path d="M1 15.200V1H15.700" stroke="#f6f6f6" stroke-width="2" fill="none"/><path d="M15.900 0.500V15.400H0.500" stroke="#707070" stroke-width="1.600" fill="none"/><path d="M4.700 8.300H11.700M8.200 4.800V11.800" stroke="#000" stroke-width="1.700"/></svg>
<span class="t" style="left:42.00px;top:713.23px;font-size:15.6px;color:#e9eef5;transform:scaleX(0.8651);">Data Analyser</span>
<svg class="r" style="left:408.50px;top:712.84px" width="16.6" height="16.6" viewBox="0 0 16.6 16.6"><rect x="0.75" y="0.75" width="15.100000000000001" height="15.100000000000001" fill="#fff" stroke="#4a4a4a" stroke-width="1.5"/><rect x="3.98" y="3.98" width="8.63" height="8.63" fill="#2e2e2e"/></svg>
<svg class="r" style="left:465.00px;top:712.84px" width="16.6" height="16.6" viewBox="0 0 16.6 16.6"><rect x="0.75" y="0.75" width="15.100000000000001" height="15.100000000000001" fill="#fff" stroke="#4a4a4a" stroke-width="1.5"/><rect x="3.98" y="3.98" width="8.63" height="8.63" fill="#2e2e2e"/></svg>
<svg class="r" style="left:520.00px;top:712.84px" width="16.6" height="16.6" viewBox="0 0 16.6 16.6"><rect x="0.75" y="0.75" width="15.100000000000001" height="15.100000000000001" fill="#fff" stroke="#4a4a4a" stroke-width="1.5"/><rect x="3.98" y="3.98" width="8.63" height="8.63" fill="#2e2e2e"/></svg>
<svg class="r" style="left:579.70px;top:710.84px" width="16.6" height="16.6" viewBox="0 0 16.6 16.6"><rect x="0.75" y="0.75" width="15.100000000000001" height="15.100000000000001" fill="#fff" stroke="#4a4a4a" stroke-width="1.5"/><rect x="3.98" y="3.98" width="8.63" height="8.63" fill="#2e2e2e"/></svg>
<svg class="r" style="left:645.00px;top:711.94px" width="15.50" height="16.8" viewBox="0 0 15.50 16.8"><rect x="0.75" y="0.75" width="20.8" height="15.3" fill="#fff" stroke="#4a4a4a" stroke-width="1.5"/></svg>
<svg class="r" style="left:22px;top:735.28px" width="16.700" height="16.200" viewBox="0 0 16.700 16.200"><rect x="0" y="0" width="16.700" height="16.200" fill="#c8c8c8"/><path d="M1 15.200V1H15.700" stroke="#f6f6f6" stroke-width="2" fill="none"/><path d="M15.900 0.500V15.400H0.500" stroke="#707070" stroke-width="1.600" fill="none"/><path d="M4.700 8.300H11.700M8.200 4.800V11.800" stroke="#000" stroke-width="1.700"/></svg>
<span class="t" style="left:42.00px;top:736.37px;font-size:15.6px;color:#e9eef5;transform:scaleX(0.8671);">Asset Maintenance</span>
<svg class="r" style="left:408.50px;top:735.98px" width="16.6" height="16.6" viewBox="0 0 16.6 16.6"><rect x="0.75" y="0.75" width="15.100000000000001" height="15.100000000000001" fill="#fff" stroke="#4a4a4a" stroke-width="1.5"/><rect x="3.98" y="3.98" width="8.63" height="8.63" fill="#2e2e2e"/></svg>
<svg class="r" style="left:465.00px;top:735.98px" width="16.6" height="16.6" viewBox="0 0 16.6 16.6"><rect x="0.75" y="0.75" width="15.100000000000001" height="15.100000000000001" fill="#fff" stroke="#4a4a4a" stroke-width="1.5"/><rect x="3.98" y="3.98" width="8.63" height="8.63" fill="#2e2e2e"/></svg>
<svg class="r" style="left:520.00px;top:735.98px" width="16.6" height="16.6" viewBox="0 0 16.6 16.6"><rect x="0.75" y="0.75" width="15.100000000000001" height="15.100000000000001" fill="#fff" stroke="#4a4a4a" stroke-width="1.5"/><rect x="3.98" y="3.98" width="8.63" height="8.63" fill="#2e2e2e"/></svg>
<svg class="r" style="left:579.70px;top:733.98px" width="16.6" height="16.6" viewBox="0 0 16.6 16.6"><rect x="0.75" y="0.75" width="15.100000000000001" height="15.100000000000001" fill="#fff" stroke="#4a4a4a" stroke-width="1.5"/><rect x="3.98" y="3.98" width="8.63" height="8.63" fill="#2e2e2e"/></svg>
<svg class="r" style="left:645.00px;top:735.08px" width="15.50" height="16.8" viewBox="0 0 15.50 16.8"><rect x="0.75" y="0.75" width="20.8" height="15.3" fill="#fff" stroke="#4a4a4a" stroke-width="1.5"/></svg>
<svg class="r" style="left:22px;top:758.42px" width="16.700" height="16.200" viewBox="0 0 16.700 16.200"><rect x="0" y="0" width="16.700" height="16.200" fill="#c8c8c8"/><path d="M1 15.200V1H15.700" stroke="#f6f6f6" stroke-width="2" fill="none"/><path d="M15.900 0.500V15.400H0.500" stroke="#707070" stroke-width="1.600" fill="none"/><path d="M4.700 8.300H11.700M8.200 4.800V11.800" stroke="#000" stroke-width="1.700"/></svg>
<span class="t" style="left:42.00px;top:759.51px;font-size:15.6px;color:#e9eef5;transform:scaleX(0.8618);">Contract Preparation</span>
<svg class="r" style="left:408.50px;top:759.12px" width="16.6" height="16.6" viewBox="0 0 16.6 16.6"><rect x="0.75" y="0.75" width="15.100000000000001" height="15.100000000000001" fill="#fff" stroke="#4a4a4a" stroke-width="1.5"/><rect x="3.98" y="3.98" width="8.63" height="8.63" fill="#2e2e2e"/></svg>
<svg class="r" style="left:465.00px;top:759.12px" width="16.6" height="16.6" viewBox="0 0 16.6 16.6"><rect x="0.75" y="0.75" width="15.100000000000001" height="15.100000000000001" fill="#fff" stroke="#4a4a4a" stroke-width="1.5"/><rect x="3.98" y="3.98" width="8.63" height="8.63" fill="#2e2e2e"/></svg>
<svg class="r" style="left:520.00px;top:759.12px" width="16.6" height="16.6" viewBox="0 0 16.6 16.6"><rect x="0.75" y="0.75" width="15.100000000000001" height="15.100000000000001" fill="#fff" stroke="#4a4a4a" stroke-width="1.5"/><rect x="3.98" y="3.98" width="8.63" height="8.63" fill="#2e2e2e"/></svg>
<svg class="r" style="left:579.70px;top:757.12px" width="16.6" height="16.6" viewBox="0 0 16.6 16.6"><rect x="0.75" y="0.75" width="15.100000000000001" height="15.100000000000001" fill="#fff" stroke="#4a4a4a" stroke-width="1.5"/><rect x="3.98" y="3.98" width="8.63" height="8.63" fill="#2e2e2e"/></svg>
<svg class="r" style="left:645.00px;top:758.22px" width="15.50" height="16.8" viewBox="0 0 15.50 16.8"><rect x="0.75" y="0.75" width="20.8" height="15.3" fill="#fff" stroke="#4a4a4a" stroke-width="1.5"/></svg>
<div class="r" style="left:724.90px;top:547.70px;width:82.10px;height:26.60px;background:#fff;box-shadow:inset 0 0 0 1.600px #c6c6c6;"></div>
<div class="r" style="left:726.40px;top:549.20px;width:79.10px;height:23.60px;background:transparent;box-shadow:inset 0 0 0 1.600px #e6e6e6;"></div>
<span class="t" style="left:758.20px;top:552.49px;font-size:15.6px;color:#000;transform:scaleX(0.7380);"><u>A</u>ll</span>
<div class="r" style="left:-12.00px;top:762.60px;width:1057.00px;height:14.40px;background:#2a2a2a;"></div>
</div></div>
</body></html>
